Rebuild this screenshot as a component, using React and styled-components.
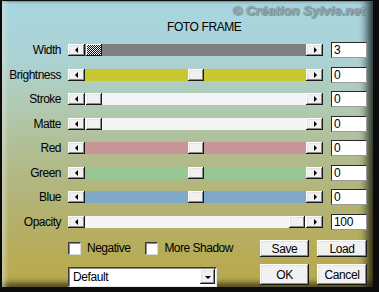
import styled, { createGlobalStyle, css } from 'styled-components';

const GlobalStyle = createGlobalStyle`
  html, body {
    margin: 0;
    padding: 0;
    background: #0c0c0c;
  }
  body {
    font-family: "Liberation Sans", Arial, sans-serif;
  }
`;

// raised 3D edge shared by buttons and thumbs
const raised = css`
  background: #f1f1f1;
  box-shadow: inset -1px -1px #1a1a1a, inset 1px 1px #ffffff,
    inset -2px -2px #8a8a8a, inset 2px 2px #e4e4e4;
`;

const Frame = styled.div`
  width: 379px;
  height: 292px;
  box-sizing: border-box;
  padding: 1px 6px 5px 2px;
  background: #0c0c0c;
  display: flex;
`;

const Panel = styled.div`
  position: relative;
  flex: 1;
  display: flex;
  flex-direction: column;
  padding-top: 19px;
  background: linear-gradient(
    180deg,
    #a7d6e0 0%,
    #acd2d4 20%,
    #b0c9b0 38%,
    #b1bb8d 55%,
    #b3b272 72%,
    #b7ab55 90%,
    #b9a94c 100%
  );
  box-shadow: inset 6px 0 5px -3px rgba(235, 240, 230, 0.6),
    inset 0 2px 2px -1px rgba(60, 70, 70, 0.45),
    inset -11px 0 9px -5px rgba(0, 0, 0, 0.7),
    inset 0 -7px 6px -3px rgba(0, 0, 0, 0.6);
  color: #000;
`;

const Watermark = styled.div`
  position: absolute;
  top: 2px;
  right: 8px;
  font-size: 13px;
  font-weight: bold;
  font-style: italic;
  letter-spacing: 0.1px;
  color: #93a9b0;
  text-shadow: 0 0 1px #5b6c72, 1px 1px 0 rgba(80, 95, 100, 0.5);
`;

const Title = styled.div`
  height: 14px;
  line-height: 14px;
  font-size: 12px;
  letter-spacing: -0.4px;
  padding-left: 165px;
`;

const Rows = styled.div`
  margin-top: 8px;
  display: flex;
  flex-direction: column;
  gap: 8.57px;
`;

const Row = styled.div`
  display: grid;
  grid-template-columns: 59px 255px 36px;
  column-gap: 7px;
  height: 16px;
  align-items: center;

  & > :nth-child(3) {
    margin-left: 1px;
  }
`;

const Label = styled.div`
  text-align: right;
  font-size: 12px;
  letter-spacing: -0.5px;
  line-height: 14px;
`;

const Slider = styled.div`
  display: flex;
  height: 12px;
`;

const ArrowButton = styled.div`
  ${raised};
  width: 17px;
  height: 12px;
  display: flex;
  align-items: center;
  justify-content: center;
  flex: none;

  &::after {
    content: '';
    width: 0;
    height: 0;
    border-top: 3px solid transparent;
    border-bottom: 3px solid transparent;
    ${({ $dir }) =>
      $dir === 'left'
        ? 'border-right: 3px solid #000; margin-right: 1px;'
        : 'border-left: 3px solid #000; margin-left: 1px;'}
  }
`;

const Track = styled.div`
  position: relative;
  flex: 1;
  background: ${({ $color }) => $color};
  ${({ $dither }) =>
    $dither &&
    css`
      background: repeating-conic-gradient(#fbfbfb 0 25%, #eeeeee 0 50%) 0 0 / 2px 2px;
    `}
`;

const Thumb = styled.div`
  position: absolute;
  top: 0;
  width: 16px;
  height: 12px;
  ${raised};
  ${({ $checker }) =>
    $checker &&
    css`
      background: repeating-conic-gradient(#111 0 25%, #f4f4f4 0 50%) 0 0 / 2px 2px;
      box-shadow: inset -1px -1px #1a1a1a, inset 1px 1px #ffffff;
    `}
`;

const ValueBox = styled.div`
  box-sizing: border-box;
  height: 16px;
  width: 36px;
  background: #fff;
  border: 1px solid #2a2a2a;
  border-right-color: #9a9a9a;
  border-bottom-color: #9a9a9a;
  font-size: 12px;
  line-height: 14px;
  padding-left: 2px;
  letter-spacing: -0.3px;
`;

const Bottom = styled.div`
  margin-top: 10px;
  display: flex;
  padding-left: 66px;
`;

const LeftColumn = styled.div`
  width: 149px;
  display: flex;
  flex-direction: column;
`;

const Checks = styled.div`
  height: 17px;
  display: flex;
  align-items: center;
  font-size: 12px;
  letter-spacing: -0.5px;
  white-space: nowrap;
`;

const Check = styled.label`
  display: flex;
  align-items: center;
  gap: 6px;
  margin-right: 15px;
`;

const CheckBox = styled.span`
  box-sizing: border-box;
  flex: none;
  width: 13px;
  height: 13px;
  background: #fff;
  border: 1px solid #3a3a3a;
  border-right-color: #d8d8d8;
  border-bottom-color: #d8d8d8;
  box-shadow: inset 1px 1px #8a8a8a;
`;

const Dropdown = styled.div`
  margin-top: 10px;
  box-sizing: border-box;
  height: 20px;
  background: #fff;
  border: 1px solid #3a3a3a;
  border-right-color: #e8e8e8;
  border-bottom-color: #e8e8e8;
  box-shadow: inset 1px 1px #8a8a8a;
  display: flex;
  align-items: center;
  justify-content: space-between;
  padding: 0 1px 0 4px;
  font-size: 12px;
  letter-spacing: -0.4px;
`;

const DropArrow = styled.div`
  ${raised};
  width: 15px;
  height: 15px;
  display: flex;
  align-items: center;
  justify-content: center;

  &::after {
    content: '';
    border-left: 3px solid transparent;
    border-right: 3px solid transparent;
    border-top: 3px solid #000;
    margin-top: 1px;
  }
`;

const ButtonGrid = styled.div`
  margin-left: 43px;
  display: grid;
  grid-template-columns: 49px 50px;
  grid-template-rows: 17px 21px;
  column-gap: 8px;
  row-gap: 7px;
`;

const Button = styled.div`
  ${raised};
  display: flex;
  align-items: center;
  justify-content: center;
  font-size: 12px;
  letter-spacing: -0.4px;
  padding-top: 1px;
  box-sizing: border-box;
`;

const sliders = [
  { label: 'Width', value: '3', pos: 0, color: '#808080', checker: true },
  { label: 'Brightness', value: '0', pos: 0.5, color: '#c9c92f' },
  { label: 'Stroke', value: '0', pos: 0, dither: true },
  { label: 'Matte', value: '0', pos: 0, dither: true },
  { label: 'Red', value: '0', pos: 0.5, color: '#c89597' },
  { label: 'Green', value: '0', pos: 0.5, color: '#97c894' },
  { label: 'Blue', value: '0', pos: 0.5, color: '#80a8c9' },
  { label: 'Opacity', value: '100', pos: 1, dither: true },
];

export default function App() {
  return (
    <>
      <GlobalStyle />
      <Frame>
        <Panel>
          <Watermark>© Création Sylvie.net</Watermark>
          <Title>FOTO FRAME</Title>
          <Rows>
            {sliders.map((s) => (
              <Row key={s.label}>
                <Label>{s.label}</Label>
                <Slider>
                  <ArrowButton $dir="left" />
                  <Track $color={s.color} $dither={s.dither}>
                    <Thumb $checker={s.checker} style={{ left: 1 + Math.round(s.pos * 203) }} />
                  </Track>
                  <ArrowButton $dir="right" />
                </Slider>
                <ValueBox>{s.value}</ValueBox>
              </Row>
            ))}
          </Rows>
          <Bottom>
            <LeftColumn>
              <Checks>
                <Check>
                  <CheckBox />
                  Negative
                </Check>
                <Check>
                  <CheckBox />
                  More Shadow
                </Check>
              </Checks>
              <Dropdown>
                Default
                <DropArrow />
              </Dropdown>
            </LeftColumn>
            <ButtonGrid>
              <Button>Save</Button>
              <Button>Load</Button>
              <Button>OK</Button>
              <Button>Cancel</Button>
            </ButtonGrid>
          </Bottom>
        </Panel>
      </Frame>
    </>
  );
}
